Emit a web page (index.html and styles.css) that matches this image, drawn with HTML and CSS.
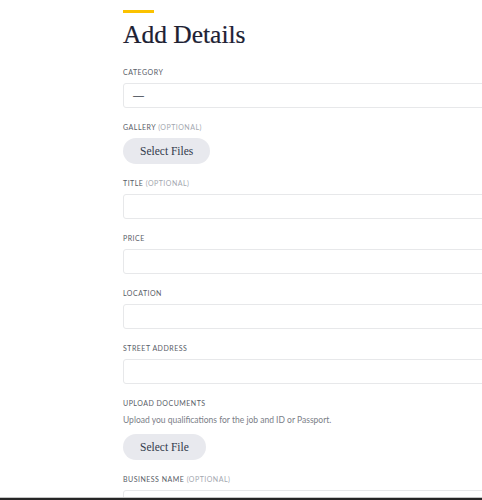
FILE: index.html
```html
<!DOCTYPE html>
<html lang="en">
<head>
<meta charset="utf-8">
<title>Add Details</title>
<link rel="stylesheet" href="styles.css">
</head>
<body>
<div class="viewport">
  <main class="page">
    <section class="details">
      <span class="accent"></span>
      <h1 class="title">Add Details</h1>
      <form class="form">
        <div class="field">
          <label class="label">Category</label>
          <div class="input select">—</div>
        </div>
        <div class="field">
          <label class="label">Gallery <span class="opt">(Optional)</span></label>
          <div><button type="button" class="pill">Select Files</button></div>
        </div>
        <div class="field">
          <label class="label">Title <span class="opt">(Optional)</span></label>
          <div class="input"></div>
        </div>
        <div class="field">
          <label class="label">Price</label>
          <div class="input"></div>
        </div>
        <div class="field">
          <label class="label">Location</label>
          <div class="input"></div>
        </div>
        <div class="field">
          <label class="label">Street Address</label>
          <div class="input"></div>
        </div>
        <div class="field">
          <label class="label">Upload Documents</label>
          <p class="help">Upload you qualifications for the job and ID or Passport.</p>
          <div><button type="button" class="pill">Select File</button></div>
        </div>
        <div class="field">
          <label class="label">Business Name <span class="opt">(Optional)</span></label>
          <div class="input"></div>
        </div>
      </form>
    </section>
  </main>
  <div class="hscroll"></div>
</div>
</body>
</html>
```

FILE: styles.css
```css
html, body {
  margin: 0;
  padding: 0;
  background: #ffffff;
}

.viewport {
  height: 500px;
  display: flex;
  flex-direction: column;
  overflow: hidden;
}

.page {
  flex: 1;
  overflow: hidden;
  padding: 10px 0 0 123px;
}

.details {
  width: 440px;
  display: flex;
  flex-direction: column;
}

.accent {
  display: block;
  width: 31px;
  height: 3px;
  background: #fbc200;
}

.title {
  margin: 6px 0 16px;
  font-family: "Liberation Serif", "Times New Roman", serif;
  font-weight: 400;
  font-size: 25.5px;
  line-height: 32px;
  color: #1d2133;
  -webkit-text-stroke: 0.2px #1d2133;
}

.form {
  display: flex;
  flex-direction: column;
  gap: 14px;
}

.field {
  display: flex;
  flex-direction: column;
  gap: 6px;
}

.label {
  display: block;
  height: 10px;
  font-family: Lato, "Liberation Sans", sans-serif;
  font-size: 7px;
  line-height: 10px;
  letter-spacing: 0.5px;
  text-transform: uppercase;
  color: #585d67;
}

.opt {
  color: #a3a7b0;
}

.input {
  box-sizing: border-box;
  height: 25px;
  border: 1px solid #e7e8ea;
  border-radius: 3px;
  background: #fff;
}

.select {
  padding-left: 9px;
  font-family: "Liberation Sans", sans-serif;
  font-size: 11px;
  line-height: 23px;
  color: #3a3f4b;
}

.pill {
  height: 26px;
  padding: 0 17px;
  border: 0;
  border-radius: 13px;
  background: #e8e9ee;
  font-family: "Liberation Serif", "Times New Roman", serif;
  font-size: 11.5px;
  color: #323a4c;
}

.help {
  margin: 0 0 2px;
  font-family: Lato, "Liberation Sans", sans-serif;
  font-size: 8.5px;
  line-height: 12px;
  color: #7a7e87;
}

.hscroll {
  height: 2px;
  border-top: 1px solid #c4c4c4;
  background: #262626;
}
```
